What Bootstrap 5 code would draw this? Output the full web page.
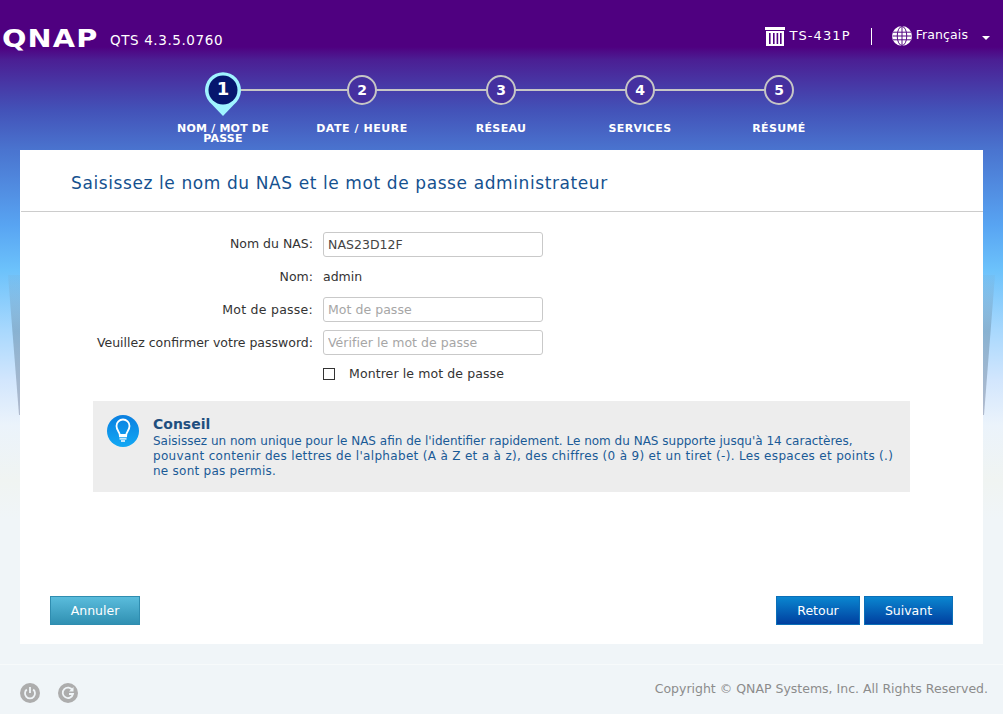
<!DOCTYPE html>
<html lang="fr">
<head>
<meta charset="utf-8">
<title>QTS</title>
<link href="https://cdn.jsdelivr.net/npm/bootstrap@5.3.0/dist/css/bootstrap.min.css" rel="stylesheet">
<style>
html,body{height:714px;overflow:hidden}
body{position:relative;width:1003px;font-family:"DejaVu Sans",Verdana,sans-serif;font-size:12.5px;color:#333;
background:linear-gradient(180deg,#4f0080 0,#4f0080 47px,#4b1f94 60px,#4352b8 110px,#4a74cf 150px,#58a4f2 225px,#6cc2fb 270px,#a8d8fd 330px,#d2e6fd 380px,#ebf3fb 425px,#f0f4f2 480px,#f0f5f8 520px,#f0f5f8 714px)}
.wedge{position:absolute;width:20px;height:140px;top:275px;background:linear-gradient(180deg,rgba(120,175,215,.2),rgba(125,165,195,.75) 40%,rgba(170,180,200,.9))}
.wedge-l{left:0;clip-path:polygon(8px 0,20px 0,20px 100%,19px 100%)}
.wedge-r{right:0;clip-path:polygon(0 0,12px 0,1px 100%,0 100%)}
.topbar{height:50px;color:#fff;position:relative}
.brand{font-family:"DejaVu Sans",sans-serif;font-weight:700;font-size:25px;line-height:20px;width:96px;letter-spacing:1px;transform-origin:left center;transform:scaleX(1.15);margin-left:2px}
.ver{font-size:13.5px;letter-spacing:.6px;margin-left:12px;padding-top:3px}
.vsep{width:1px;height:17px;background:#fff;margin:0 20px}
.lang{font-size:12.5px;margin-top:-2px;letter-spacing:.1px}
.node{font-size:13px;letter-spacing:1.1px}
.globe{margin-right:4px}
.caret-mark{width:0;height:0;border-left:4.5px solid transparent;border-right:4.5px solid transparent;border-top:4px solid #fff;margin:3px 0 0 14px}
.topbar-l{padding-top:27px}
.topbar-r{padding:26px 13px 0 0}
.wiz{height:100px;padding-top:22px;position:relative;margin-left:-1px}
.wiz-step{width:139px;position:relative;text-align:center;color:#fff}
.wiz-step:not(:last-child)::after{content:"";position:absolute;top:17px;left:70px;width:139px;height:2px;background:#c6c6c6}
.wiz-dot{display:flex;align-items:center;justify-content:center;width:30px;height:30px;border:2px solid #c6c6c6;border-radius:50%;font-weight:700;font-size:14px;margin:3px auto 0;position:relative;z-index:1;background:#4530a0}
.wiz-pin{display:block;width:36px;height:44px;margin:0 auto -4px;position:relative;z-index:1}
.wiz-num{position:absolute;top:5px;left:0;right:0;z-index:2;font-weight:700;font-size:18px;line-height:24px}
.wiz-label{font-weight:700;font-size:11px;line-height:10px;margin-top:19px;padding:0 18px;letter-spacing:.35px}
.wiz-step:first-child .wiz-label{margin-top:12px;padding:0 20px;letter-spacing:.2px}
.wiz-step .wiz-label-w{letter-spacing:.55px;padding:0 10px}
.panel{margin:0 20px;height:494px;background:#fff;position:relative}
.panel-title{height:62px;border-bottom:1px solid #ccc;color:#15518f;font-size:17px;line-height:66px;padding-left:50px;margin-left:1px;letter-spacing:.6px}
.frm{padding-top:16px}
.frm-row{height:32.7px;display:flex;align-items:center}
.frm-row-last{height:31px;padding-left:303px;letter-spacing:.1px}
.frm-lab{width:293px;text-align:right;margin:0 10px 0 0;color:#333;padding-top:1px}
.frm-lab-w{letter-spacing:.25px}
.frm-in{width:220px;height:25px;padding:0 4px;border:1px solid #c9c9c9;border-radius:3px;font-size:12.5px;color:#444;outline:0;letter-spacing:.04px}
.frm-in::placeholder{color:#a6a6a6;opacity:1}
.frm-check{width:12px;height:12px;border:1px solid #333;margin:0 14px 0 0;appearance:none;background:#fff}
.tip{margin:11px 73px 0;height:91px;background:#ededed;color:#1a5a96;font-size:12px;line-height:15px;padding:15px 14px 0;display:flex;gap:14px}
.tip h6{font-size:14px;font-weight:700;line-height:17px;margin:0 0 1px;color:#1f4f7f}
.tip-ico{flex:0 0 32px;width:32px;height:32px;margin-top:-1px}
.tip-l2{letter-spacing:.32px;white-space:nowrap}
.tip-l3{letter-spacing:.25px}
.panel-foot{position:absolute;left:30px;right:30px;bottom:19px;display:flex;justify-content:space-between}
.act{height:29px;border:1px solid;border-radius:0;padding:2px 0 0;font-size:12.5px;color:#fff;font-family:inherit}
.act-c{width:90px;background:linear-gradient(180deg,#5abcdc,#3090b2);border-color:#2f8db0}
.act-p{background:linear-gradient(180deg,#0a86d0,#003f9f);border-color:#0b6fb8}
.act-r{width:84px}.act-s{width:89px}
.foot{position:absolute;left:0;right:0;top:664px;height:50px;border-top:1px solid #f7fafb;padding:0 15px 0 20px;display:flex;justify-content:space-between}
.foot-ico{width:20px;height:20px;margin:18px 18px 0 0}
.copy{color:#8c8c8c;font-size:12.5px;padding-top:15px}
</style>
</head>
<body>
<div class="wedge wedge-l"></div>
<div class="wedge wedge-r"></div>
<header class="topbar d-flex justify-content-between align-items-start">
  <div class="d-flex align-items-center topbar-l">
    <div class="brand">QNAP</div>
    <div class="ver">QTS 4.3.5.0760</div>
  </div>
  <div class="d-flex align-items-center topbar-r">
    <svg width="20" height="19" viewBox="0 0 20 19" class="me-1"><path fill="#fff" d="M0 0h20v3H0zM1 4h18v15H1z"/><path fill="#4f0080" d="M4 6h1.600v11H4zM8 6h1.600v11H8zM11.600 6h1.600v11h-1.600zM15 6h1.600v11H15z"/></svg>
    <span class="node">TS-431P</span>
    <span class="vsep"></span>
    <svg width="20" height="20" viewBox="0 0 21 21" class="globe"><circle cx="10.500" cy="10.500" r="10.500" fill="#fff"/><g fill="none" stroke="#4f0080" stroke-width="1"><ellipse cx="10.500" cy="10.500" rx="5" ry="10"/><path d="M10.500 .5v20M1 6.500h19M.5 10.500h20M1 14.500h19"/></g></svg>
    <span class="lang">Français</span>
    <span class="caret-mark"></span>
  </div>
</header>
<nav class="wiz d-flex justify-content-center">
  <div class="wiz-step">
    <svg class="wiz-pin" viewBox="0 0 36 44"><path d="M18 44 7 32.500A18 18 0 1 1 29 32.500Z" fill="#a0f4ff"/><circle cx="18" cy="18" r="14.500" fill="#06176e"/></svg>
    <div class="wiz-num">1</div>
    <div class="wiz-label">NOM / MOT DE PASSE</div>
  </div>
  <div class="wiz-step"><div class="wiz-dot">2</div><div class="wiz-label wiz-label-w">DATE / HEURE</div></div>
  <div class="wiz-step"><div class="wiz-dot">3</div><div class="wiz-label">RÉSEAU</div></div>
  <div class="wiz-step"><div class="wiz-dot">4</div><div class="wiz-label">SERVICES</div></div>
  <div class="wiz-step"><div class="wiz-dot">5</div><div class="wiz-label">RÉSUMÉ</div></div>
</nav>
<main class="panel">
  <div class="panel-title">Saisissez le nom du NAS et le mot de passe administrateur</div>
  <form class="frm">
    <div class="frm-row"><label class="frm-lab" for="a">Nom du NAS:</label><input id="a" class="frm-in" value="NAS23D12F"></div>
    <div class="frm-row"><span class="frm-lab">Nom:</span><span>admin</span></div>
    <div class="frm-row"><label class="frm-lab frm-lab-w" for="b">Mot de passe:</label><input id="b" class="frm-in" placeholder="Mot de passe"></div>
    <div class="frm-row"><label class="frm-lab" for="c">Veuillez confirmer votre password:</label><input id="c" class="frm-in" placeholder="Vérifier le mot de passe"></div>
    <div class="frm-row frm-row-last"><input id="d" type="checkbox" class="frm-check"><label for="d">Montrer le mot de passe</label></div>
  </form>
  <div class="tip">
    <svg class="tip-ico" viewBox="0 0 32 32"><defs><linearGradient id="g" x1="0" y1="0" x2="0" y2="1"><stop offset="0" stop-color="#0a7fe0"/><stop offset="1" stop-color="#12a8f4"/></linearGradient></defs><circle cx="16" cy="16" r="16" fill="url(#g)"/><path d="M12.800 20c0-3-3.300-4.500-3.300-9a6.500 6.500 0 0 1 13 0c0 4.500-3.300 6-3.300 9z" fill="none" stroke="#fff" stroke-width="1.800"/><path d="M12 21.500h8M12.500 23.800h7M14 26h4" stroke="#fff" stroke-width="1.300"/></svg>
    <div>
      <h6>Conseil</h6>
      Saisissez un nom unique pour le NAS afin de l'identifier rapidement. Le nom du NAS supporte jusqu'à 14 caractères,<br>
      <span class="tip-l2">pouvant contenir des lettres de l'alphabet (A à Z et a à z), des chiffres (0 à 9) et un tiret (-). Les espaces et points (.)</span><br>
      <span class="tip-l3">ne sont pas permis.</span>
    </div>
  </div>
  <div class="panel-foot">
    <button type="button" class="act act-c">Annuler</button>
    <div class="d-flex gap-1">
      <button type="button" class="act act-p act-r">Retour</button>
      <button type="button" class="act act-p act-s">Suivant</button>
    </div>
  </div>
</main>
<footer class="foot">
  <div class="d-flex">
    <svg class="foot-ico" viewBox="0 0 20 20"><circle cx="10" cy="10" r="10" fill="#adadad"/><path d="M6.800 6.500a5 5 0 1 0 6.400 0" fill="none" stroke="#f0f5f8" stroke-width="1.800"/><path d="M10 4v6" stroke="#f0f5f8" stroke-width="1.800"/></svg>
    <svg class="foot-ico" viewBox="0 0 20 20"><circle cx="10" cy="10" r="10" fill="#adadad"/><path d="M14.500 7.300A5.200 5.200 0 1 0 15 11h-4" fill="none" stroke="#f0f5f8" stroke-width="1.800"/><path d="M15.500 4v4.500H11z" fill="#f0f5f8"/></svg>
  </div>
  <div class="copy">Copyright © QNAP Systems, Inc. All Rights Reserved.</div>
</footer>
</body>
</html>
